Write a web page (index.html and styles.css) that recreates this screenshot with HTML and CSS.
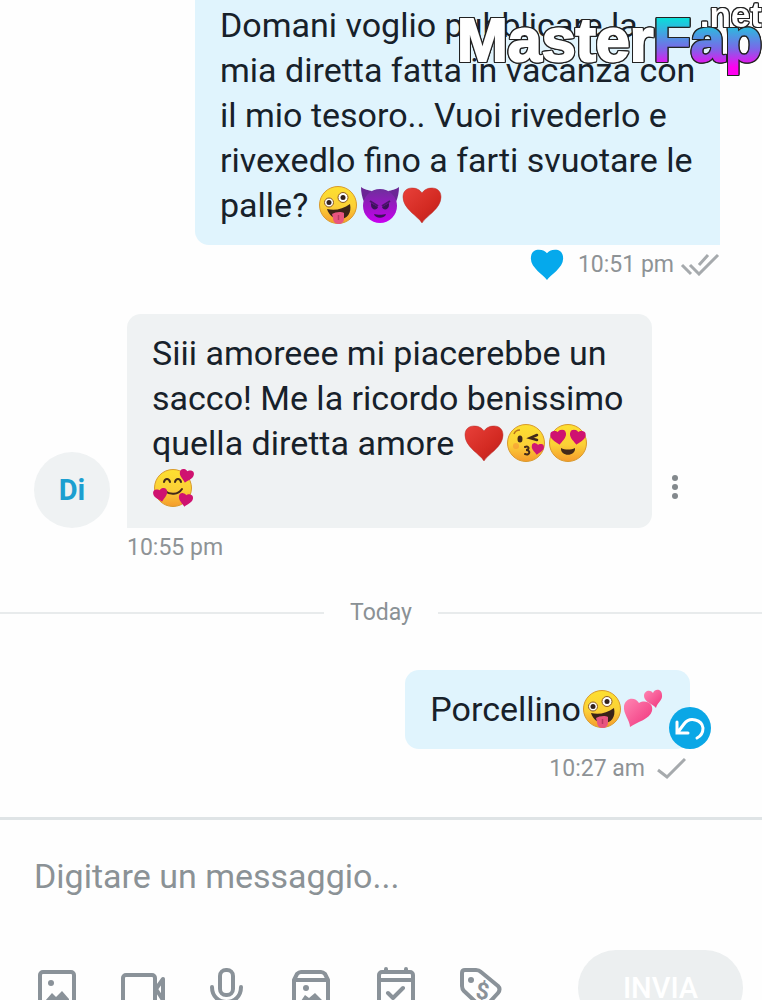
FILE: index.html
```html
<!DOCTYPE html>
<html lang="it">
<head>
	<meta charset="utf-8">
	<title>Chat</title>
	<meta name="viewport" content="width=device-width, initial-scale=1.0">
	<link rel="stylesheet" href="styles.css">
</head>
<body>

<!-- emoji and tick symbols -->
<svg class="symbols" aria-hidden="true">
	<defs>
		<linearGradient id="gFace" x1="0" y1="0" x2="0" y2="1">
			<stop offset="0" stop-color="#fde030"/><stop offset=".55" stop-color="#fbd037"/><stop offset="1" stop-color="#f59b2c"/>
		</linearGradient>
		<linearGradient id="gDevil" x1="0" y1="0" x2="0" y2="1">
			<stop offset="0" stop-color="#6e2f9c"/><stop offset=".5" stop-color="#9a16c4"/><stop offset="1" stop-color="#c800f0"/>
		</linearGradient>
		<linearGradient id="gRed" x1="0" y1="0" x2="1" y2="1">
			<stop offset="0" stop-color="#e8403a"/><stop offset=".6" stop-color="#d32a22"/><stop offset="1" stop-color="#b71c1c"/>
		</linearGradient>
		<linearGradient id="gPink" x1="0" y1="0" x2="1" y2="1">
			<stop offset="0" stop-color="#ff86b3"/><stop offset="1" stop-color="#f0337c"/>
		</linearGradient>
	</defs>
	<symbol id="heartShape" viewBox="0 0 40 36">
		<path d="M20 36C16 30 1 22 1 11C1 4 5 1 10.500 1C15 1 18.500 3 20 5C21.500 3 25 1 29.500 1C35 1 39 4 39 11C39 22 24 30 20 36Z"/>
	</symbol>
	<symbol id="face" viewBox="0 0 42 42">
		<circle cx="21" cy="21" r="18.500" fill="url(#gFace)" stroke="#d99a2b" stroke-width="1"/>
	</symbol>
	<symbol id="zany" viewBox="0 0 42 42">
		<use href="#face" width="42" height="42"/>
		<path d="M10 25C18 27 26 25 33 20C35 29 30 35 23 35C16 35 12 31 10 25Z" fill="#3a2318"/>
		<path d="M15 30C18 28 24 27 27 29L27 34C27 38 25 40 21.500 40C18 40 16 37 16 34Z" fill="#e8557f"/>
		<path d="M21.500 31V36" stroke="#b93862" stroke-width="1.500"/>
		<circle cx="12" cy="18.500" r="4.500" fill="#fff" stroke="#8c5a1d"/>
		<circle cx="12" cy="18.500" r="2.500" fill="#33221c"/>
		<circle cx="26" cy="13.500" r="5" fill="#fff" stroke="#8c5a1d"/>
		<circle cx="26" cy="13.500" r="2.500" fill="#33221c"/>
	</symbol>
	<symbol id="devil" viewBox="0 0 42 42">
		<path d="M2 3C6 6 9 6 13 7L5 18C3 13 2 8 2 3ZM40 3C36 6 33 6 29 7L37 18C39 13 40 8 40 3Z" fill="#6b2696"/>
		<circle cx="21" cy="22" r="17" fill="url(#gDevil)"/>
		<path d="M12 19L19 23C18 27 12 26 12 21ZM30 19L23 23C24 27 30 26 30 21Z" fill="#3b1259"/>
		<path d="M11 17L19 22M31 17L23 22" stroke="#4a146b" stroke-width="2"/>
		<path d="M15 30C18 31 24 31 27 30C26 35 16 35 15 30Z" fill="#3b1259"/>
	</symbol>
	<symbol id="redHeart" viewBox="0 0 42 42">
		<path d="M21 39C17 32 2 25 2 13C2 7 6 4 11 4C16 4 19 6 21 9C23 6 26 4 31 4C36 4 40 7 40 13C40 25 25 32 21 39Z" fill="url(#gRed)" stroke="#b9302a" stroke-width=".5"/>
	</symbol>
	<symbol id="kiss" viewBox="0 0 42 42">
		<use href="#face" width="42" height="42"/>
		<ellipse cx="15" cy="17" rx="2.500" ry="3.500" fill="#42291a"/>
		<path d="M9 12C10 9 13 8 15 8" fill="none" stroke="#b8741c" stroke-width="1.500"/>
		<path d="M32 13L25 16L32 18" fill="none" stroke="#42291a" stroke-width="2.500" stroke-linecap="round"/>
		<circle cx="11" cy="24" r="3" fill="#f48b35" opacity=".5"/>
		<path d="M20 25C24 23 25 28 21 28C26 28 25 34 20 32" fill="none" stroke="#42291a" stroke-width="2" stroke-linecap="round"/>
		<use href="#heartShape" x="26" y="21" width="13" height="12" fill="#d01872" transform="rotate(8 32 27)"/>
	</symbol>
	<symbol id="loveEyes" viewBox="0 0 42 42">
		<use href="#face" width="42" height="42"/>
		<use href="#heartShape" x="3" y="8" width="17" height="15" fill="#cf1270" transform="rotate(-8 11 15)"/>
		<use href="#heartShape" x="22" y="8" width="17" height="15" fill="#cf1270" transform="rotate(8 31 15)"/>
		<path d="M14 26C18 28 24 28 28 26C29 35 13 35 14 26Z" fill="#42291a"/>
	</symbol>
	<symbol id="hearts" viewBox="0 0 42 42">
		<use href="#face" width="42" height="42"/>
		<path d="M12 15C13 11 17 11 18 15M23 15C24 11 28 11 29 15" fill="none" stroke="#42291a" stroke-width="2" stroke-linecap="round"/>
		<path d="M13 24C18 28 26 28 30 22" fill="none" stroke="#42291a" stroke-width="2" stroke-linecap="round"/>
		<use href="#heartShape" x="27" y="2" width="15" height="14" fill="#cf1270" transform="rotate(12 34 8)"/>
		<use href="#heartShape" x="1" y="21" width="15" height="14" fill="#cf1270" transform="rotate(-12 9 27)"/>
		<use href="#heartShape" x="26" y="26" width="15" height="14" fill="#cf1270" transform="rotate(10 33 33)"/>
	</symbol>
	<symbol id="twoHearts" viewBox="0 0 42 42">
		<path d="M7 39C7 32 0 26 1 18C2 10 12 8 16 15C23 11 31 16 29 23C27 31 14 34 7 39Z" fill="url(#gPink)"/>
		<path d="M33 20C30 16 21 14 21 8C21 3 27 1 30 5C32 0 39 1 39 7C40 12 34 15 33 20Z" fill="url(#gPink)"/>
	</symbol>
</svg>

<div class="app">
	<main class="chat">
		<div class="message sent">
			<div class="bubble">Domani voglio pubblicare la mia diretta fatta in vacanza con il mio tesoro.. Vuoi rivederlo e rivexedlo fino a farti svuotare le palle? <svg class="emoji"><use href="#zany"/></svg><svg class="emoji"><use href="#devil"/></svg><svg class="emoji"><use href="#redHeart"/></svg></div>
			<div class="meta">
				<svg class="like" viewBox="0 0 40 36" preserveAspectRatio="none"><use href="#heartShape"/></svg>
				<time>10:51 pm</time>
				<svg class="ticks" width="40" height="24" viewBox="0 0 40 24"><path d="M2 13L11 22M10 13L19 22L38 3M19 13L28 3"/></svg>
			</div>
		</div>

		<div class="message received">
			<div class="avatar">Di</div>
			<div class="bubble">Siii amoreee mi piacerebbe un sacco! Me la ricordo benissimo quella diretta amore <svg class="emoji"><use href="#redHeart"/></svg><svg class="emoji"><use href="#kiss"/></svg><svg class="emoji"><use href="#loveEyes"/></svg> <svg class="emoji"><use href="#hearts"/></svg></div>
			<button class="more" type="button" aria-label="Menu">
				<svg width="8" height="26" viewBox="0 0 8 26"><circle cx="4" cy="4" r="3"/><circle cx="4" cy="13" r="3"/><circle cx="4" cy="22" r="3"/></svg>
			</button>
			<div class="meta"><time>10:55 pm</time></div>
		</div>

		<div class="day"><span>Today</span></div>

		<div class="message sent short">
			<div class="bubble">Porcellino<svg class="emoji"><use href="#zany"/></svg><svg class="emoji"><use href="#twoHearts"/></svg>
				<button class="undo" type="button" aria-label="Annulla">
					<svg width="42" height="42" viewBox="0 0 42 42"><path d="M8 15V26H19M9 25L15 17C21 9 33 13 34 21C34 26 32 29 28 31"/></svg>
				</button>
			</div>
			<div class="meta">
				<time>10:27 am</time>
				<svg class="ticks" width="30" height="24" viewBox="0 0 30 24"><path d="M2 14L11 21L29 3"/></svg>
			</div>
		</div>
	</main>

	<form class="composer">
		<input class="text" type="text" placeholder="Digitare un messaggio..." aria-label="Messaggio">
		<div class="tools">
			<button type="button" aria-label="Immagine">
				<svg viewBox="0 0 46 46"><rect x="6" y="7" width="34" height="34" rx="3"/><circle class="fill" cx="17" cy="18" r="3"/><path class="fill" d="M11 36L18 28L22 32L28 26L35 34V36Z"/></svg>
			</button>
			<button type="button" aria-label="Video">
				<svg viewBox="0 0 46 46"><rect x="4" y="10" width="32" height="28" rx="3"/><path d="M44 14V35L37 24Z"/></svg>
			</button>
			<button type="button" aria-label="Audio">
				<svg viewBox="0 0 46 46"><rect x="16" y="5" width="13" height="25" rx="6"/><path d="M8 22C8 42 37 42 37 22M23 37V44"/></svg>
			</button>
			<button type="button" aria-label="Archivio">
				<svg viewBox="0 0 46 46"><path d="M5 15L8 9Q10 7 12 7H32Q34 7 36 9L39 15V41H5ZM5 15H39"/><circle class="fill" cx="17" cy="23" r="3"/><path class="fill" d="M12 36L16 30L20 33L26 28L33 35V36Z"/></svg>
			</button>
			<button type="button" aria-label="Calendario">
				<svg viewBox="0 0 46 46"><rect x="5" y="7" width="34" height="34" rx="3"/><path d="M5 15H39M12 4V7M32 4V7M14 28L19 33L29 23"/></svg>
			</button>
			<button type="button" aria-label="Prezzo">
				<svg viewBox="0 0 46 46"><path d="M3 8Q3 5 6 5H17Q20 5 22 7L39 21Q42 24 39 28L27 41Q24 44 21 41L5 26Q3 24 3 21Z"/><circle class="fill" cx="12" cy="15" r="3"/><text x="17" y="34" transform="rotate(8 23 26)">$</text></svg>
			</button>
			<button class="send" type="submit">INVIA</button>
		</div>
	</form>
</div>

<div class="watermark">
	<span class="name">Master<span class="accent">Fap</span></span>
	<span class="tld">.net</span>
</div>

</body>
</html>
```
FILE: styles.css
```css
* { box-sizing: border-box; }
body { margin: 0; overflow: hidden; font-family: Roboto, "Liberation Sans", sans-serif; background: #fefefe; color: #17212a; }
button { padding: 0; border: 0; background: none; font: inherit; cursor: pointer; }
.symbols { position: absolute; width: 0; height: 0; }

.app { display: flex; flex-direction: column; height: 100vh; }

/* messages */
.chat {
	display: flex;
	flex: 1;
	flex-direction: column;
	justify-content: flex-end;
	gap: 31px;
	min-height: 0;
	padding: 0 42px 30px 34px;
	overflow: hidden;
}
.message { flex: none; }
.bubble { padding: 17px 25px; border-radius: 14px; font-size: 34px; line-height: 45px; }
.emoji { width: 42px; height: 42px; vertical-align: -9px; }

.sent { display: flex; flex-direction: column; align-items: flex-end; }
.sent .bubble { position: relative; max-width: 525px; padding-right: 20px; border-bottom-right-radius: 0; background: #e0f4fd; }
.short { padding-right: 30px; }
.short .bubble { padding-right: 25px; border-bottom-right-radius: 14px; }

.received { display: grid; grid-template-columns: 93px minmax(0, 525px) 46px; align-items: end; }
.received .bubble { border-bottom-left-radius: 0; background: #eff2f3; }
.received .meta { grid-column: 2; }

.avatar { width: 76px; height: 76px; border-radius: 50%; background: #eff2f3; color: #1c9fd0; font-size: 29px; font-weight: 700; line-height: 76px; text-align: center; }
.more { height: 82px; }
.more svg { display: block; margin: auto; fill: #83898d; }

.meta { display: flex; align-items: center; height: 38px; color: #8e9396; font-size: 23px; }
.like { width: 34px; height: 31px; margin-right: 14px; fill: #05a9ec; }
.ticks { margin-left: 6px; fill: none; stroke: #a6aaad; stroke-width: 3; }
.short .ticks { margin-left: 11px; margin-right: 4px; }

.undo { position: absolute; right: -21px; bottom: 0; width: 42px; height: 42px; border-radius: 50%; background: #0ba7e6; }
.undo svg { display: block; fill: none; stroke: #fff; stroke-width: 3; stroke-linecap: round; }

.day { display: flex; flex: none; align-items: center; gap: 26px; height: 31px; margin: 0 -42px 11px -34px; color: #8a9195; font-size: 23px; }
.day::before, .day::after { content: ""; flex: 1; height: 2px; background: #e8ebec; }

/* composer, the bottom of the toolbar runs off the window */
.composer { flex: none; height: 183px; border-top: 3px solid #dfe4e6; overflow: hidden; }
.text { display: block; width: 100%; height: 112px; padding: 0 34px; border: 0; outline: 0; background: none; font: 34px Roboto, "Liberation Sans", sans-serif; }
.text::placeholder { color: #8b9296; opacity: 1; }
.tools { display: flex; align-items: center; gap: 39px; height: 76px; margin-top: 18px; padding: 0 19px 0 34px; }
.tools svg { display: block; width: 46px; height: 46px; fill: none; stroke: #8a9299; stroke-width: 4; stroke-linecap: round; stroke-linejoin: round; }
.tools .fill, .tools text { fill: #8a9299; stroke: none; }
.tools text { font-size: 23px; font-weight: 700; }
.send { width: 165px; height: 76px; margin-left: auto; border-radius: 38px; background: #eceff0; color: #fff; font-size: 29px; font-weight: 500; }

/* watermark over the top corner */
.watermark {
	position: absolute;
	top: 0;
	right: 0;
	font-family: "Liberation Sans", Arial, sans-serif;
	color: #fff;
	white-space: nowrap;
	filter: drop-shadow(1px 0 0 #222) drop-shadow(-1px 0 0 #222) drop-shadow(0 1px 0 #222) drop-shadow(0 -1px 0 #222);
}
.name { display: block; padding-top: 4px; font-size: 61px; font-weight: 700; line-height: 72px; -webkit-text-stroke: 2px #fff; }
.accent { display: inline-block; background: linear-gradient(#00e8d8 16%, #7a68e8 62%, #ff00f0 88%); -webkit-background-clip: text; background-clip: text; color: transparent; -webkit-text-stroke-color: transparent; }
.tld { position: absolute; top: 0; right: 0; font-size: 35px; font-weight: 700; line-height: 30px; }
```
